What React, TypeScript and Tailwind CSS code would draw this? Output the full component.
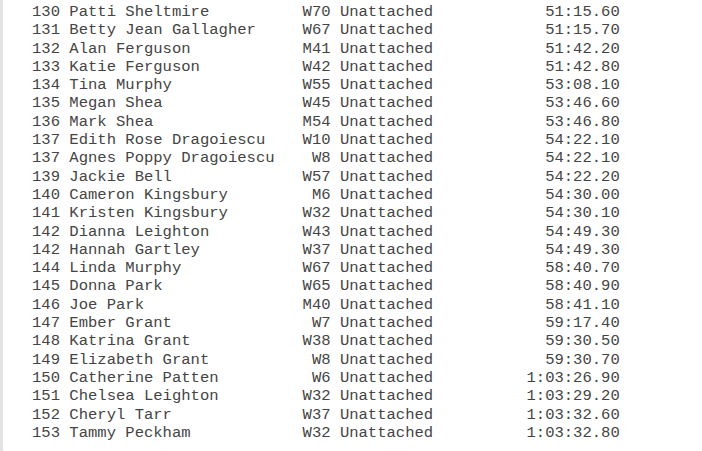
const ROWS: [string, string, string, string][] = [
  ['130', 'Patti Sheltmire', 'W70', '51:15.60'],
  ['131', 'Betty Jean Gallagher', 'W67', '51:15.70'],
  ['132', 'Alan Ferguson', 'M41', '51:42.20'],
  ['133', 'Katie Ferguson', 'W42', '51:42.80'],
  ['134', 'Tina Murphy', 'W55', '53:08.10'],
  ['135', 'Megan Shea', 'W45', '53:46.60'],
  ['136', 'Mark Shea', 'M54', '53:46.80'],
  ['137', 'Edith Rose Dragoiescu', 'W10', '54:22.10'],
  ['137', 'Agnes Poppy Dragoiescu', 'W8', '54:22.10'],
  ['139', 'Jackie Bell', 'W57', '54:22.20'],
  ['140', 'Cameron Kingsbury', 'M6', '54:30.00'],
  ['141', 'Kristen Kingsbury', 'W32', '54:30.10'],
  ['142', 'Dianna Leighton', 'W43', '54:49.30'],
  ['142', 'Hannah Gartley', 'W37', '54:49.30'],
  ['144', 'Linda Murphy', 'W67', '58:40.70'],
  ['145', 'Donna Park', 'W65', '58:40.90'],
  ['146', 'Joe Park', 'M40', '58:41.10'],
  ['147', 'Ember Grant', 'W7', '59:17.40'],
  ['148', 'Katrina Grant', 'W38', '59:30.50'],
  ['149', 'Elizabeth Grant', 'W8', '59:30.70'],
  ['150', 'Catherine Patten', 'W6', '1:03:26.90'],
  ['151', 'Chelsea Leighton', 'W32', '1:03:29.20'],
  ['152', 'Cheryl Tarr', 'W37', '1:03:32.60'],
  ['153', 'Tammy Peckham', 'W32', '1:03:32.80'],
];

function line([rank, name, age, time]: [string, string, string, string]) {
  return `${rank} ${name.padEnd(25)}${age.padStart(3)} Unattached${time.padStart(20)}`;
}

export default function App() {
  return (
    <div className="flex w-[702px] h-[451px] bg-white overflow-hidden">
      <div className="w-[3px] shrink-0 bg-[#e3e3e3]" />
      <pre className="m-0 pl-[29px] pt-[3px] font-['Courier_New','Liberation_Mono',monospace] text-[15.55px] leading-[18.3px] text-[#444]">
        {ROWS.map(line).join('\n')}
      </pre>
    </div>
  );
}
